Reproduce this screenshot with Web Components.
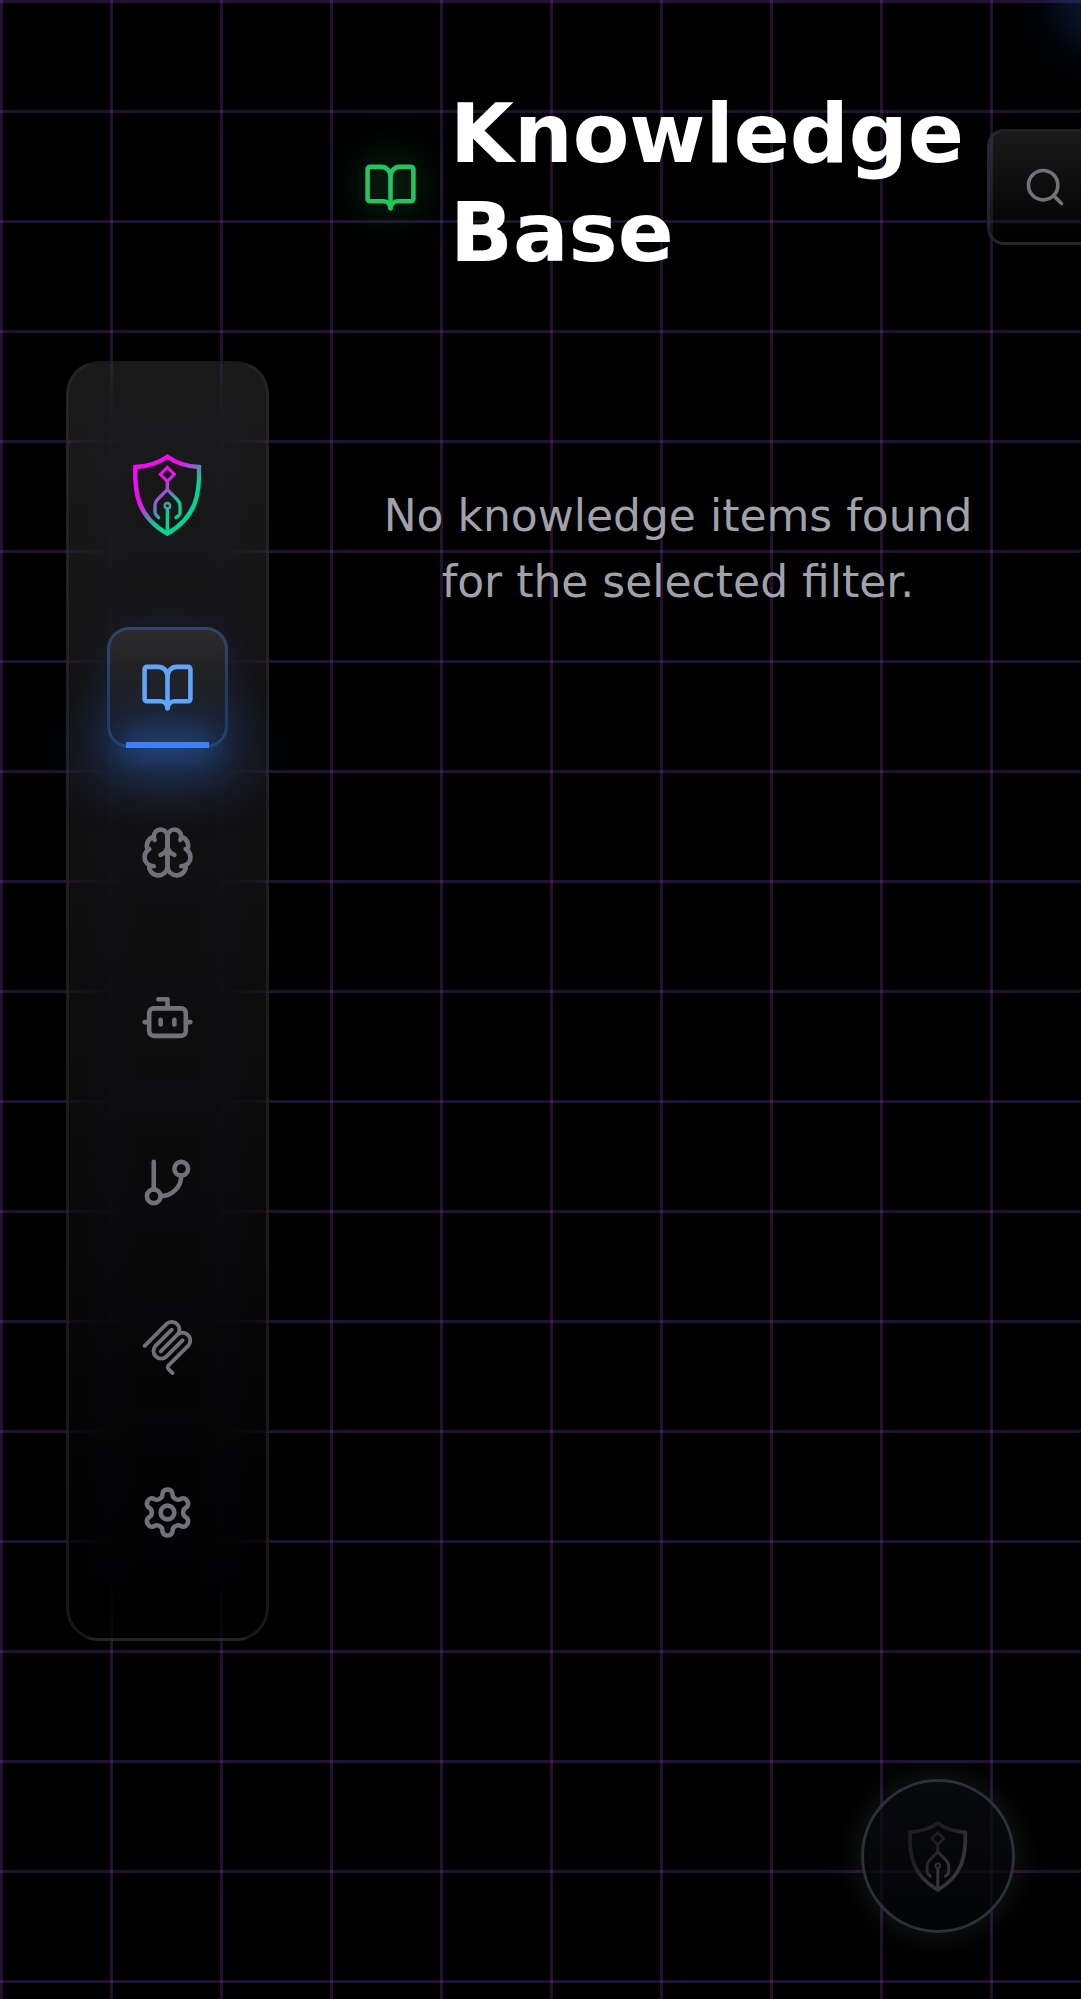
<!DOCTYPE html>
<html lang="en">
<head>
<meta charset="utf-8">
<title>Knowledge Base</title>
<style>
html,body{margin:0;background:#000;overflow:hidden}
body{font-family:"DejaVu Sans",sans-serif;color:#fff}
</style>
</head>
<body>
<app-shell>
  <side-nav slot="nav">
    <nav-item icon="book" active></nav-item>
    <nav-item icon="brain"></nav-item>
    <nav-item icon="bot"></nav-item>
    <nav-item icon="branch"></nav-item>
    <nav-item icon="mcp"></nav-item>
    <nav-item icon="settings"></nav-item>
  </side-nav>
  <page-header slot="main">Knowledge Base</page-header>
  <empty-state slot="main">No knowledge items found for the selected filter.</empty-state>
  <chat-button slot="overlay"></chat-button>
</app-shell>
<script>
const ICONS={
 book:'<path d="M12 7v14"/><path d="M3 18a1 1 0 0 1-1-1V4a1 1 0 0 1 1-1h5a4 4 0 0 1 4 4 4 4 0 0 1 4-4h5a1 1 0 0 1 1 1v13a1 1 0 0 1-1 1h-6a3 3 0 0 0-3 3 3 3 0 0 0-3-3z"/>',
 brain:'<path d="M12 5a3 3 0 1 0-5.997.125 4 4 0 0 0-2.526 5.77 4 4 0 0 0 .556 6.588A4 4 0 1 0 12 18Z"/><path d="M12 5a3 3 0 1 1 5.997.125 4 4 0 0 1 2.526 5.77 4 4 0 0 1-.556 6.588A4 4 0 1 1 12 18Z"/><path d="M15 13a4.5 4.5 0 0 1-3-4 4.5 4.5 0 0 1-3 4"/><path d="M17.599 6.5a3 3 0 0 0 .399-1.375"/><path d="M6.003 5.125A3 3 0 0 0 6.401 6.5"/><path d="M3.477 10.896a4 4 0 0 1 .585-.396"/><path d="M19.938 10.5a4 4 0 0 1 .585.396"/><path d="M6 18a4 4 0 0 1-1.967-.516"/><path d="M19.967 17.484A4 4 0 0 1 18 18"/>',
 bot:'<path d="M12 8V4H8"/><rect width="16" height="12" x="4" y="8" rx="2"/><path d="M2 14h2"/><path d="M20 14h2"/><path d="M15 13v2"/><path d="M9 13v2"/>',
 branch:'<path d="M6 3v12"/><circle cx="18" cy="6" r="3"/><circle cx="6" cy="18" r="3"/><path d="M18 9a9 9 0 0 1-9 9"/>',
 mcp:'<path fill="currentColor" stroke="none" d="M13.85 0a4.16 4.16 0 0 0-2.95 1.217L1.456 10.66a.835.835 0 0 0 0 1.18.835.835 0 0 0 1.18 0l9.442-9.442a2.49 2.49 0 0 1 3.541 0 2.49 2.49 0 0 1 0 3.541L8.59 12.97l-.1.1a.835.835 0 0 0 0 1.18.835.835 0 0 0 1.18 0l.1-.098 7.03-7.034a2.49 2.49 0 0 1 3.542 0l.049.05a2.49 2.49 0 0 1 0 3.54l-8.54 8.54a1.96 1.96 0 0 0 0 2.755l1.753 1.753a.835.835 0 0 0 1.18 0 .835.835 0 0 0 0-1.18l-1.753-1.753a.266.266 0 0 1 0-.394l8.54-8.54a4.185 4.185 0 0 0 0-5.9l-.05-.05a4.16 4.16 0 0 0-2.95-1.218c-.2 0-.401.02-.6.048a4.17 4.17 0 0 0-1.17-3.552A4.16 4.16 0 0 0 13.85 0m0 3.333a.84.84 0 0 0-.59.245L6.275 10.56a4.186 4.186 0 0 0 0 5.902 4.186 4.186 0 0 0 5.902 0L19.16 9.48a.835.835 0 0 0 0-1.18.835.835 0 0 0-1.18 0l-6.985 6.984a2.49 2.49 0 0 1-3.54 0 2.49 2.49 0 0 1 0-3.54l6.983-6.985a.835.835 0 0 0 0-1.18.84.84 0 0 0-.59-.245"/>',
 settings:'<path d="M12.22 2h-.44a2 2 0 0 0-2 2v.18a2 2 0 0 1-1 1.73l-.43.25a2 2 0 0 1-2 0l-.15-.08a2 2 0 0 0-2.73.73l-.22.38a2 2 0 0 0 .73 2.73l.15.1a2 2 0 0 1 1 1.72v.51a2 2 0 0 1-1 1.74l-.15.09a2 2 0 0 0-.73 2.73l.22.38a2 2 0 0 0 2.73.73l.15-.08a2 2 0 0 1 2 0l.43.25a2 2 0 0 1 1 1.73V20a2 2 0 0 0 2 2h.44a2 2 0 0 0 2-2v-.18a2 2 0 0 1 1-1.73l.43-.25a2 2 0 0 1 2 0l.15.08a2 2 0 0 0 2.73-.73l.22-.39a2 2 0 0 0-.73-2.73l-.15-.08a2 2 0 0 1-1-1.74v-.5a2 2 0 0 1 1-1.74l.15-.09a2 2 0 0 0 .73-2.73l-.22-.38a2 2 0 0 0-2.73-.73l-.15.08a2 2 0 0 1-2 0l-.43-.25a2 2 0 0 1-1-1.73V4a2 2 0 0 0-2-2z"/><circle cx="12" cy="12" r="3"/>',
 search:'<circle cx="11" cy="11" r="8"/><path d="m21 21-4.3-4.3"/>'
};
const define=(name,html)=>customElements.define(name,class extends HTMLElement{
  constructor(){
    super();
    this.attachShadow({mode:'open'}).innerHTML=typeof html==='function'?html(this):html;
  }
});

define('line-icon',el=>`<style>
:host{display:block;flex:none;width:55px;height:55px}
svg{display:block;width:100%;height:100%}
</style><svg viewBox="0 0 24 24" fill="none" stroke="currentColor" stroke-width="2" stroke-linecap="round" stroke-linejoin="round">${ICONS[el.getAttribute('name')]}</svg>`);

define('shield-logo',`<style>
:host{display:block;flex:none;width:68px;height:82px}
svg{display:block;width:100%;height:100%;overflow:visible}
.a{stop-color:var(--logo-from,#f40cf4)}.b{stop-color:var(--logo-to,#00d492)}
</style><svg viewBox="0 0 204 246" fill="none" stroke="url(#g)" stroke-linecap="round">
<defs><linearGradient id="g" gradientUnits="userSpaceOnUse" x1="84" y1="84" x2="142" y2="142"><stop class="a"/><stop class="b" offset="1"/></linearGradient></defs>
<path stroke-width="13" stroke-linejoin="miter" d="M103 8C76 27 43 37 7 39C4 120 15 188 103 239C190 188 201 120 198 39C163 37 130 27 103 8Z"/>
<path stroke-width="9" d="M103 40L124 61L103 82L82 61Z"/>
<path stroke-width="10" stroke-linejoin="round" d="M103 82V107M103 107L75 135Q66 144 66 154V174Q66 180 70 184L77 191M103 107L131 135Q141 145 141 155V174Q141 182 137 185L129 191"/>
<circle cx="103" cy="155" r="8" stroke-width="7"/>
<path stroke-width="10" d="M103 164V236"/>
</svg>`);

define('nav-item',el=>`<style>
:host{display:flex;position:relative;box-sizing:border-box;width:121px;height:121px;align-items:center;justify-content:center;border-radius:22px;color:#71717a;border:3px solid transparent}
:host([active]){color:#60a5fa;border-color:rgba(59,130,246,.3);background:linear-gradient(to bottom,rgba(255,255,255,.1),rgba(0,0,0,.2)) border-box;box-shadow:0 0 41px rgba(59,130,246,.12)}
.bar{display:none}
:host([active]) .bar{display:block;position:absolute;bottom:-3px;left:16px;width:83px;height:6px;background:#3b82f6;box-shadow:0 0 27px 5.5px rgba(59,130,246,.28),0 4px 60px 22px rgba(59,130,246,.48)}
line-icon{position:relative}
</style><span class="bar"></span><line-icon name="${el.getAttribute('icon')}"></line-icon>`);

define('side-nav',`<style>
:host{display:flex;flex-direction:column;align-items:center;box-sizing:border-box;width:203px;height:1280px;border-radius:33px;border:3px solid rgba(45,45,48,.5);background:linear-gradient(to bottom,rgba(255,255,255,.1),rgba(0,0,0,.3));backdrop-filter:blur(33px);padding-top:90px}
shield-logo{margin-right:2px}
.items{display:flex;flex-direction:column;gap:44px;margin-top:91px}
</style><shield-logo></shield-logo><div class="items"><slot></slot></div>`);

define('search-box',`<style>
:host{display:flex;flex:none;align-items:center;box-sizing:border-box;width:600px;height:116px;padding-left:33px;border-radius:17px;border:3px solid rgba(45,45,48,.75);background:linear-gradient(to bottom,rgba(255,255,255,.1),rgba(0,0,0,.3));color:#71717a}
line-icon{width:44px;height:44px}
</style><line-icon name="search"></line-icon>`);

define('page-header',`<style>
:host{display:flex;align-items:center;height:205px}
h1{margin:-8px 26px 0 32.5px;width:511px;flex:none;font-size:82.5px;line-height:99px;font-weight:700}
.mark{color:#22c55e;margin-top:1px;border-radius:50%;filter:drop-shadow(0 0 22px rgba(34,197,94,.65))}
</style><line-icon class="mark" name="book"></line-icon><h1><slot></slot></h1><search-box></search-box>`);

define('empty-state',`<style>
:host{display:block;width:631px;margin-top:194px;text-align:center;font-size:44px;line-height:66px;color:#a1a1aa}
</style><slot></slot>`);

define('chat-button',`<style>
:host{display:flex;align-items:center;justify-content:center;box-sizing:border-box;width:154px;height:154px;border-radius:50%;border:3px solid #2a3139;background:linear-gradient(to bottom,rgba(10,13,18,.7),rgba(4,6,9,.7)) border-box;box-shadow:0 0 36px rgba(150,160,160,.16);--logo-from:#1f1f1f;--logo-to:#353535}
shield-logo{width:59px;height:71px;margin-right:1px}
</style><shield-logo></shield-logo>`);

define('app-shell',`<style>
:host{display:flex;align-items:flex-start;gap:93.5px;position:relative;box-sizing:border-box;width:1081px;height:1999px;padding-left:66px;overflow:hidden;
background:radial-gradient(circle at 1112px -8px,rgba(30,90,180,.45),rgba(30,90,180,.22) 40px,rgba(30,90,180,.045) 75px,transparent 108px),linear-gradient(to right,rgba(168,85,247,.2) 3px,transparent 3px) 0 0/110px 110px,linear-gradient(to bottom,rgba(168,85,247,.2) 3px,transparent 3px) 0 0/110px 110px,#000}
.nav{padding-top:361px}
main{flex:1;min-width:0;padding-top:84px}
.overlay{position:absolute;right:66px;bottom:66px}
</style><div class="nav"><slot name="nav"></slot></div><main><slot name="main"></slot></main><div class="overlay"><slot name="overlay"></slot></div>`);
</script>
</body>
</html>
